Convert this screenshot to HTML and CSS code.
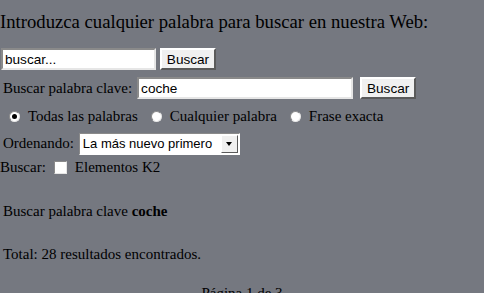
FILE: index.html
```html
<!DOCTYPE html>
<html lang="es">
<head>
  <meta charset="UTF-8" />
  <title>Buscar</title>
  <link rel="stylesheet" href="styles.css">
</head>
<body>
  <h3 class="intro">Introduzca cualquier palabra para buscar en nuestra Web:</h3>

  <form class="quick-search">
    <input type="text" class="field field-quick" value="buscar..." />
    <button type="button" class="btn">Buscar</button>
  </form>

  <form class="search-form">
    <div class="row row-keyword">
      <label for="kw">Buscar palabra clave:</label>
      <input type="text" id="kw" class="field field-keyword" value="coche" />
      <button type="button" class="btn btn-keyword">Buscar</button>
    </div>

    <div class="row row-radios">
      <label class="opt"><span class="radio checked"></span>Todas las palabras</label>
      <label class="opt"><span class="radio"></span>Cualquier palabra</label>
      <label class="opt"><span class="radio"></span>Frase exacta</label>
    </div>

    <div class="row row-order">
      <span>Ordenando:</span>
      <div class="select">
        <span class="select-text">La más nuevo primero</span>
        <span class="select-arrow"></span>
      </div>
    </div>

    <div class="row row-areas">
      <span>Buscar:</span>
      <label class="opt"><span class="check"></span>Elementos K2</label>
    </div>
  </form>

  <p class="keyword-info">Buscar palabra clave <b>coche</b></p>
  <p class="total">Total: 28 resultados encontrados.</p>
  <p class="pages">Página 1 de 3</p>
</body>
</html>
```

FILE: styles.css
```css
body {
  margin: 0;
  background: #757880;
  color: #000;
  font-family: "Liberation Serif", "Times New Roman", serif;
  font-size: 15px;
  line-height: 17px;
}

.intro {
  font-size: 18.7px;
  line-height: 22px;
  font-weight: normal;
  margin: 0;
  padding-top: 11px;
  height: 48px;
  box-sizing: border-box;
}

.field {
  box-sizing: border-box;
  height: 22px;
  margin: 0;
  padding: 1px 2px;
  border: 2px solid;
  border-color: #8a8a8a #e6e6e6 #e6e6e6 #8a8a8a;
  background: #fff;
  font-family: "Liberation Sans", Arial, sans-serif;
  font-size: 13.6px;
  color: #000;
}

.btn {
  box-sizing: border-box;
  height: 22px;
  width: 56px;
  margin: 0;
  padding: 0;
  background: #f0f0f0;
  border: 2px solid;
  border-color: #ffffff #5a5a5a #5a5a5a #ffffff;
  font-family: "Liberation Sans", Arial, sans-serif;
  font-size: 13.6px;
  color: #000;
}

.quick-search {
  display: flex;
  gap: 4px;
  margin: 0 0 0 1px;
  height: 22px;
}

.field-quick { width: 155px; }

.row {
  display: flex;
  align-items: center;
}

.row-keyword {
  margin: 7px 0 0 3px;
  gap: 5px;
  height: 22px;
}

.field-keyword { width: 216px; }
.btn-keyword { margin-left: 2px; }

.row-radios {
  margin: 8px 0 0 9px;
  gap: 13px;
  height: 18px;
}

.opt {
  display: flex;
  align-items: center;
  gap: 8px;
}

.radio {
  box-sizing: border-box;
  width: 11px;
  height: 11px;
  border-radius: 50%;
  background: #fff;
  border: 1px solid;
  border-color: #8a8a8a #e6e6e6 #e6e6e6 #8a8a8a;
  position: relative;
}

.radio.checked::after {
  content: "";
  position: absolute;
  left: 2px;
  top: 2px;
  width: 5px;
  height: 5px;
  border-radius: 50%;
  background: #000;
}

.row-order {
  margin: 8px 0 0 3px;
  gap: 5px;
  height: 21px;
}

.select {
  box-sizing: border-box;
  width: 161px;
  height: 22px;
  display: flex;
  align-items: center;
  background: #fff;
  border: 1px solid;
  border-color: #8a8a8a #ffffff #ffffff #8a8a8a;
  font-family: "Liberation Sans", Arial, sans-serif;
  font-size: 13px;
}

.select-text {
  flex: 1;
  padding-left: 3px;
}

.select-arrow {
  box-sizing: border-box;
  width: 17px;
  height: 18px;
  margin-right: 1px;
  background: #f0f0f0;
  border: 1px solid;
  border-color: #ffffff #5a5a5a #5a5a5a #ffffff;
  position: relative;
}

.select-arrow::after {
  content: "";
  position: absolute;
  left: 4px;
  top: 6px;
  border-left: 3.5px solid transparent;
  border-right: 3.5px solid transparent;
  border-top: 4px solid #000;
}

.row-areas {
  margin: 4px 0 0 0;
  gap: 8px;
  height: 18px;
}

.check {
  box-sizing: border-box;
  width: 13px;
  height: 13px;
  background: #fff;
  border: 1px solid;
  border-color: #8a8a8a #e6e6e6 #e6e6e6 #8a8a8a;
}

.keyword-info {
  margin: 27px 0 0 3px;
}

.total {
  margin: 26px 0 0 3px;
}

.pages {
  margin: 22px 0 0;
  text-align: center;
}
```
